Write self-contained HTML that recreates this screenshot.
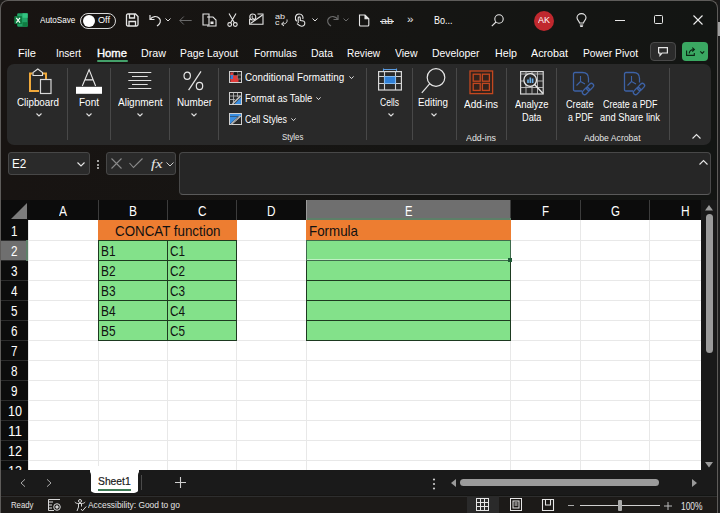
<!DOCTYPE html>
<html><head><meta charset="utf-8">
<style>
*{box-sizing:border-box;margin:0;padding:0}
html,body{width:720px;height:513px;overflow:hidden;background:#1c1a18;font-family:"Liberation Sans",sans-serif;position:relative}
.x{position:absolute;white-space:nowrap;line-height:1;transform-origin:0 0}
.r{position:absolute}
svg{position:absolute;overflow:visible}
</style></head><body>
<div class="r" style="left:0px;top:0px;width:718px;height:513px;background:linear-gradient(90deg,#181412,#151513 60%,#131513);border:1px solid #5e5c5a;border-bottom:none;border-radius:8px 8px 0 0"></div>
<div class="r" style="left:718px;top:0px;width:2px;height:513px;background:#1b1b1b;"></div>
<div class="r" style="left:718px;top:22px;width:2px;height:14px;background:#a0a0a0;"></div>
<div class="r" style="left:718px;top:36px;width:2px;height:477px;background:#1e1e1e;"></div>
<svg style="left:13.5px;top:13px" width="14" height="14" viewBox="0 0 14 14">
<rect x="3.2" y="0.3" width="10.5" height="13.4" rx="1.2" fill="#21a366"/>
<rect x="8.5" y="0.3" width="5.2" height="4.5" fill="#33c481"/>
<rect x="8.5" y="9.2" width="5.2" height="4.5" fill="#107c41"/>
<rect x="0.3" y="3" width="7.8" height="8" rx="1" fill="#107c41"/>
<path d="M2.3 4.8 L6 9.6 M6 4.8 L2.3 9.6" stroke="#fff" stroke-width="1.1"/></svg>
<div class="x" style="left:40px;top:15.58px;font-size:9px;color:#fff;transform:scaleX(0.904);">AutoSave</div>
<div class="r" style="left:80px;top:12.5px;width:36px;height:16px;background:transparent;border:1.2px solid #d8d8d8;border-radius:8px"></div>
<div class="r" style="left:82.5px;top:14.5px;width:12px;height:12px;background:#fff;border-radius:50%"></div>
<div class="x" style="left:98px;top:15.16px;font-size:9.5px;color:#fff;transform:scaleX(0.960);">Off</div>
<svg style="left:125px;top:13px" width="14" height="14" viewBox="0 0 14 14" fill="none" stroke="#e6e6e6" stroke-width="1.3">
<path d="M1.5 2.5 Q1.5 1 3 1 H10.5 L13 3.5 V11.5 Q13 13 11.5 13 H3 Q1.5 13 1.5 11.5 Z"/><path d="M4.5 1 V5 H9.5 V1"/><path d="M4 13 V8.5 H10.5 V13"/></svg>
<svg style="left:148px;top:13px" width="14" height="14" viewBox="0 0 14 14" fill="none" stroke="#e6e6e6" stroke-width="1.2">
<path d="M2 2 V6.5 H6.5"/><path d="M2.3 6.3 C4 3 9 2.5 11.5 5.5 C13.5 8 12 11 9 13"/></svg>
<svg style="left:165px;top:18px" width="6" height="4" viewBox="0 0 6 4" fill="none" stroke="#ddd" stroke-width="1"><path d="M0.5 0.5 L3 3 L5.5 0.5"/></svg>
<svg style="left:179px;top:16px" width="13" height="9" viewBox="0 0 13 9" fill="none" stroke="#6a6a6a" stroke-width="1">
<path d="M12.7 4.5 H0.8 M4.8 0.5 L0.8 4.5 L4.8 8.5"/></svg>
<svg style="left:202px;top:13px" width="15" height="14" viewBox="0 0 15 14" fill="none" stroke="#e6e6e6" stroke-width="1.1">
<path d="M1 1 H7 V12 H1 Z"/><path d="M5 4 H11 L14 7 V13 H5"/><rect x="8.5" y="8.5" width="3" height="2.5" fill="#e6e6e6" stroke="none"/></svg>
<svg style="left:227px;top:13px" width="11" height="14" viewBox="0 0 11 14" fill="none" stroke="#e6e6e6" stroke-width="1.1">
<path d="M2 0.5 L7.5 10 M9 0.5 L3.5 10"/><circle cx="2.7" cy="11.5" r="1.9"/><circle cx="8.3" cy="11.5" r="1.9"/></svg>
<svg style="left:249px;top:13px" width="15" height="12" viewBox="0 0 15 12" fill="none" stroke="#e6e6e6" stroke-width="1.1">
<path d="M0.6 6 V11.2 H14 V1 H8.5"/><path d="M1.5 10.5 L13.5 2"/><circle cx="3.8" cy="4" r="3"/><path d="M3.2 2.5 V5.5 H4.8" stroke-width="0.9"/></svg>
<div class="x" style="left:275.2px;top:13.25px;font-size:7.5px;color:#e6e6e6;transform:scaleX(1.199);">ab</div>
<div class="x" style="left:275.2px;top:18.85px;font-size:7.5px;color:#e6e6e6;transform:scaleX(1.200);">c</div>
<svg style="left:280px;top:19px" width="8" height="7" viewBox="0 0 8 7" fill="none" stroke="#e6e6e6" stroke-width="1"><path d="M7 0.5 C7.5 3.5 6 5 2 5 M4 2.8 L1.5 5 L4 7"/></svg>
<svg style="left:294px;top:13px" width="12" height="14" viewBox="0 0 12 14" fill="none" stroke="#e6e6e6" stroke-width="1.1">
<path d="M2.8 8.2 C0.5 6.5 0.8 1 5 1 C8.5 1 9.5 4 8.8 6"/><path d="M4.2 10 V5 C4.2 3.5 6.3 3.5 6.3 5 V7.5 C8 7.5 10.8 8 10.8 10 C10.8 12 9.5 13.2 7.5 13.2 C5.5 13.2 4.5 12 3 10.5"/></svg>
<svg style="left:312px;top:18px" width="6" height="4" viewBox="0 0 6 4" fill="none" stroke="#ddd" stroke-width="1"><path d="M0.5 0.5 L3 3 L5.5 0.5"/></svg>
<svg style="left:326px;top:13px" width="14" height="14" viewBox="0 0 14 14" fill="none" stroke="#6a6a6a" stroke-width="1.2">
<path d="M12 2 V6.5 H7.5"/><path d="M11.7 6.3 C10 3 5 2.5 2.5 5.5 C0.5 8 2 11 5 13"/></svg>
<svg style="left:343px;top:18px" width="6" height="4" viewBox="0 0 6 4" fill="none" stroke="#6a6a6a" stroke-width="1"><path d="M0.5 0.5 L3 3 L5.5 0.5"/></svg>
<svg style="left:358px;top:14px" width="12" height="13" viewBox="0 0 12 13" fill="none" stroke="#e6e6e6" stroke-width="1.1">
<path d="M1.5 1 H7 L10.8 4.8 V11 Q10.8 12 9.8 12 H2.5 Q1.5 12 1.5 11 Z"/><path d="M7 1 V4.8 H10.8" fill="#e6e6e6"/></svg>
<div class="x" style="left:381px;top:15.76px;font-size:9.5px;color:#e6e6e6;transform:scaleX(1.136);">ab</div>
<div class="r" style="left:380px;top:20.5px;width:14px;height:1px;background:#e6e6e6;"></div>
<div class="x" style="left:407px;top:15.04px;font-size:10px;color:#e6e6e6;transform:scaleX(1.169);">&raquo;</div>
<div class="x" style="left:434px;top:15.54px;font-size:10px;color:#fff;transform:scaleX(0.900);">Bo...</div>
<svg style="left:491px;top:14px" width="13" height="13" viewBox="0 0 13 13" fill="none" stroke="#e6e6e6" stroke-width="1.1">
<circle cx="8" cy="5" r="4.2"/><path d="M5 8 L0.8 12.2"/></svg>
<div class="r" style="left:533.5px;top:11px;width:20px;height:20px;background:#c0282e;border-radius:50%"></div>
<div class="x" style="left:537.5px;top:16.38px;font-size:9px;color:#fff;transform:scaleX(0.999);">AK</div>
<svg style="left:576px;top:13px" width="11" height="14" viewBox="0 0 11 14" fill="none" stroke="#e6e6e6" stroke-width="1.1">
<path d="M3.5 10 C3.5 8 1 7 1 4.8 C1 2.4 3 0.6 5.5 0.6 C8 0.6 10 2.4 10 4.8 C10 7 7.5 8 7.5 10 Z"/><path d="M3.8 12 H7.2 M4.2 13.4 H6.8"/></svg>
<div class="r" style="left:615px;top:20px;width:10px;height:1px;background:#e6e6e6;"></div>
<div class="r" style="left:654px;top:15px;width:9px;height:9px;background:transparent;border:1.1px solid #e6e6e6;border-radius:1.5px"></div>
<svg style="left:693px;top:15px" width="10" height="10" viewBox="0 0 10 10" fill="none" stroke="#eee" stroke-width="1.1"><path d="M0.5 0.5 L9.5 9.5 M9.5 0.5 L0.5 9.5"/></svg>
<div class="x" style="left:18px;top:47.89px;font-size:11px;color:#fff;transform:scaleX(1.015);">File</div>
<div class="x" style="left:56px;top:47.89px;font-size:11px;color:#fff;transform:scaleX(0.909);">Insert</div>
<div class="x" style="left:97px;top:47.89px;font-size:11px;color:#fff;transform:scaleX(1.022);-webkit-text-stroke:0.35px #fff">Home</div>
<div class="x" style="left:141px;top:47.89px;font-size:11px;color:#fff;transform:scaleX(0.974);">Draw</div>
<div class="x" style="left:180px;top:47.89px;font-size:11px;color:#fff;transform:scaleX(0.939);">Page Layout</div>
<div class="x" style="left:254px;top:47.89px;font-size:11px;color:#fff;transform:scaleX(0.938);">Formulas</div>
<div class="x" style="left:311px;top:47.89px;font-size:11px;color:#fff;transform:scaleX(0.947);">Data</div>
<div class="x" style="left:347px;top:47.89px;font-size:11px;color:#fff;transform:scaleX(0.915);">Review</div>
<div class="x" style="left:394.5px;top:47.89px;font-size:11px;color:#fff;transform:scaleX(0.952);">View</div>
<div class="x" style="left:432px;top:47.89px;font-size:11px;color:#fff;transform:scaleX(0.947);">Developer</div>
<div class="x" style="left:495px;top:47.89px;font-size:11px;color:#fff;transform:scaleX(0.972);">Help</div>
<div class="x" style="left:531px;top:47.89px;font-size:11px;color:#fff;transform:scaleX(0.976);">Acrobat</div>
<div class="x" style="left:583px;top:47.89px;font-size:11px;color:#fff;transform:scaleX(0.937);">Power Pivot</div>
<div class="r" style="left:97px;top:60px;width:31px;height:1.5px;background:#44a06a;border-radius:1px"></div>
<div class="r" style="left:650px;top:42px;width:26px;height:19px;background:#2b2b2b;border:1px solid #4a4a4a;border-radius:4px"></div>
<svg style="left:658px;top:47px" width="10" height="9" viewBox="0 0 10 9" fill="none" stroke="#e6e6e6" stroke-width="1.2"><path d="M0.6 0.6 H9.4 V6 H4 L2 8.3 V6 H0.6 Z"/></svg>
<div class="r" style="left:682px;top:42px;width:25.5px;height:19px;background:#3aa862;border-radius:4px"></div>
<svg style="left:686px;top:47px" width="10" height="9" viewBox="0 0 10 9" fill="none" stroke="#0b2413" stroke-width="1.1"><path d="M0.6 3.5 V8.4 H8.3 V6"/><path d="M3.2 6.5 C3.2 4 4.8 2.6 8 2.6 M6.3 0.6 L8.4 2.6 L6.3 4.6"/></svg>
<svg style="left:700px;top:50.5px" width="4.5" height="3" viewBox="0 0 4.5 3" fill="none" stroke="#0b2413" stroke-width="1.1"><path d="M0.3 0.3 L2.25 2.4 L4.2 0.3"/></svg>
<div class="r" style="left:7px;top:64px;width:704px;height:81px;background:#292929;border-radius:7px"></div>
<div class="r" style="left:67px;top:68px;width:1px;height:72px;background:#484848;"></div>
<div class="r" style="left:110px;top:68px;width:1px;height:72px;background:#484848;"></div>
<div class="r" style="left:169px;top:68px;width:1px;height:72px;background:#484848;"></div>
<div class="r" style="left:218px;top:68px;width:1px;height:72px;background:#484848;"></div>
<div class="r" style="left:366px;top:68px;width:1px;height:72px;background:#484848;"></div>
<div class="r" style="left:412px;top:68px;width:1px;height:72px;background:#484848;"></div>
<div class="r" style="left:456px;top:68px;width:1px;height:72px;background:#484848;"></div>
<div class="r" style="left:506px;top:68px;width:1px;height:72px;background:#484848;"></div>
<div class="r" style="left:556px;top:68px;width:1px;height:72px;background:#484848;"></div>
<div class="r" style="left:669px;top:68px;width:1px;height:72px;background:#484848;"></div>
<svg style="left:28px;top:68px" width="25" height="27" viewBox="0 0 25 27" fill="none">
<path d="M4.5 5.5 H2 V23 H11" stroke="#f0a93b" stroke-width="2"/><path d="M15 5.5 H18 V11" stroke="#f0a93b" stroke-width="2"/>
<path d="M5 7.5 V4.5 L9.8 1 L14.5 4.5 V7.5 Z" stroke="#e0e0e0" stroke-width="1.1" fill="#292929"/>
<rect x="12.5" y="11.5" width="10.5" height="14" stroke="#d8d8d8" stroke-width="1.2" fill="#292929"/></svg>
<div class="x" style="left:17.3px;top:97.53px;font-size:10px;color:#fff;transform:scaleX(0.981);">Clipboard</div>
<svg style="left:35.5px;top:112.5px" width="6" height="4" viewBox="0 0 6 4" fill="none" stroke="#e0e0e0" stroke-width="1.1"><path d="M0.5 0.5 L3 3 L5.5 0.5"/></svg>
<svg style="left:76px;top:68px" width="26" height="26" viewBox="0 0 26 26" fill="none">
<path d="M6.3 18 L13.1 1.6 L19.6 18 M9 11.9 H17.1" stroke="#eaeaea" stroke-width="1.1"/><rect x="0" y="18.8" width="26" height="7" fill="#fff"/></svg>
<div class="x" style="left:79px;top:97.53px;font-size:10px;color:#fff;transform:scaleX(0.999);">Font</div>
<svg style="left:86px;top:112.5px" width="6" height="4" viewBox="0 0 6 4" fill="none" stroke="#e0e0e0" stroke-width="1.1"><path d="M0.5 0.5 L3 3 L5.5 0.5"/></svg>
<svg style="left:128px;top:71px" width="24" height="19" viewBox="0 0 24 19" fill="none" stroke="#e0e0e0" stroke-width="1">
<path d="M0.3 1.5 H23.3 M4 5.5 H19.7 M0.3 9.5 H23.3 M4 13.5 H19.7 M0.3 17.5 H23.3"/></svg>
<div class="x" style="left:117.5px;top:97.53px;font-size:10px;color:#fff;transform:scaleX(1.001);">Alignment</div>
<svg style="left:137px;top:112.5px" width="6" height="4" viewBox="0 0 6 4" fill="none" stroke="#e0e0e0" stroke-width="1.1"><path d="M0.5 0.5 L3 3 L5.5 0.5"/></svg>
<svg style="left:182px;top:70px" width="22" height="22" viewBox="0 0 22 22" fill="none" stroke="#e6e6e6" stroke-width="1.2">
<ellipse cx="5.2" cy="5.7" rx="3.2" ry="3.6"/><ellipse cx="17.5" cy="16" rx="3.2" ry="3.6"/><path d="M6.6 20.2 L19 1.3"/></svg>
<div class="x" style="left:177px;top:97.53px;font-size:10px;color:#fff;transform:scaleX(0.984);">Number</div>
<svg style="left:191px;top:112.5px" width="6" height="4" viewBox="0 0 6 4" fill="none" stroke="#e0e0e0" stroke-width="1.1"><path d="M0.5 0.5 L3 3 L5.5 0.5"/></svg>
<svg style="left:229px;top:71px" width="13" height="12" viewBox="0 0 13 12">
<rect x="0.5" y="0.5" width="12" height="11" fill="#2a2a2a" stroke="#d0d0d0" stroke-width="1"/>
<path d="M4.5 1 V11 M8.5 1 V11 M1 4 H12 M1 8 H12" stroke="#8a8a8a" stroke-width="0.8"/>
<rect x="1.5" y="1.5" width="3" height="2.5" fill="#e03a3a"/><rect x="4.5" y="1.5" width="4" height="2.5" fill="#111"/>
<rect x="1.5" y="4" width="2.5" height="4" fill="#3a7ad8"/><rect x="4" y="4.5" width="4.5" height="3.5" fill="#e03a3a"/>
<rect x="1.5" y="8" width="8" height="3" fill="#e03a3a"/></svg>
<div class="x" style="left:245.4px;top:72.53px;font-size:10.3px;color:#fff;transform:scaleX(0.957);">Conditional Formatting</div>
<svg style="left:348.5px;top:75.5px" width="5" height="3.5" viewBox="0 0 5 3.5" fill="none" stroke="#e0e0e0" stroke-width="1"><path d="M0.4 0.4 L2.5 2.6 L4.6 0.4"/></svg>
<svg style="left:229px;top:92px" width="13" height="13" viewBox="0 0 13 13" fill="none">
<path d="M5 12.5 L12.5 5 V12.5 Z" fill="#3a8ee0"/><rect x="0.5" y="4.5" width="5" height="8" fill="#2a2a2a"/>
<rect x="0.5" y="0.5" width="12" height="12" stroke="#d0d0d0" stroke-width="1"/><path d="M0.5 4 H12.5 M0.5 7.5 H6 M4.5 0.5 V12.5 M8.5 0.5 V5" stroke="#c0c0c0" stroke-width="0.8"/>
<path d="M3.5 12 L11.5 4" stroke="#f0f0f0" stroke-width="1.6"/><path d="M3.5 12 L11.5 4" stroke="#2a2a2a" stroke-width="0.5"/></svg>
<div class="x" style="left:245.4px;top:94.33px;font-size:10px;color:#fff;transform:scaleX(0.941);">Format as Table</div>
<svg style="left:316px;top:96.5px" width="5" height="3.5" viewBox="0 0 5 3.5" fill="none" stroke="#e0e0e0" stroke-width="1"><path d="M0.4 0.4 L2.5 2.6 L4.6 0.4"/></svg>
<svg style="left:229px;top:113px" width="13" height="12" viewBox="0 0 13 12" fill="none">
<rect x="1" y="1" width="11" height="2.5" fill="#3a8ee0"/><path d="M1 11 V4 L8.5 4 L1 11 Z" fill="#3a8ee0"/>
<rect x="0.5" y="0.5" width="12" height="11" stroke="#d0d0d0" stroke-width="1"/>
<path d="M2.5 11 L11.5 3" stroke="#f0f0f0" stroke-width="1.6"/><path d="M2.5 11 L11.5 3" stroke="#2a2a2a" stroke-width="0.5"/></svg>
<div class="x" style="left:245.4px;top:115.13px;font-size:10px;color:#fff;transform:scaleX(0.889);">Cell Styles</div>
<svg style="left:291px;top:117.5px" width="5" height="3.5" viewBox="0 0 5 3.5" fill="none" stroke="#e0e0e0" stroke-width="1"><path d="M0.4 0.4 L2.5 2.6 L4.6 0.4"/></svg>
<div class="x" style="left:282px;top:132.46px;font-size:9.5px;color:#e6e6e6;transform:scaleX(0.823);">Styles</div>
<svg style="left:378px;top:68px" width="24" height="23" viewBox="0 0 24 23" fill="none">
<path d="M5.5 1.5 H18.5 M5.5 0.5 V3 M18.5 0.5 V3" stroke="#5a9be0" stroke-width="1.1"/>
<rect x="6.5" y="8.5" width="11" height="7" fill="#2f7fd6"/>
<rect x="0.6" y="3.6" width="22.8" height="18.4" stroke="#d8d8d8" stroke-width="1.2"/>
<path d="M0.6 8.5 H23.4 M0.6 15.5 H23.4 M6.5 3.6 V22 M17.5 3.6 V22" stroke="#cfcfcf" stroke-width="1.1"/>
<path d="M6.5 8.5 H17.5 V15.5 H6.5 Z" stroke="#7fb8f0" stroke-width="1"/></svg>
<div class="x" style="left:380px;top:97.53px;font-size:10px;color:#fff;transform:scaleX(0.855);">Cells</div>
<svg style="left:387.5px;top:112.5px" width="6" height="4" viewBox="0 0 6 4" fill="none" stroke="#e0e0e0" stroke-width="1.1"><path d="M0.5 0.5 L3 3 L5.5 0.5"/></svg>
<svg style="left:421px;top:68px" width="25" height="26" viewBox="0 0 25 26" fill="none" stroke="#e6e6e6" stroke-width="1.2">
<circle cx="15" cy="9.5" r="8.8"/><path d="M8.8 15.7 L0.8 24.8"/></svg>
<div class="x" style="left:418px;top:97.53px;font-size:10px;color:#fff;transform:scaleX(0.981);">Editing</div>
<svg style="left:430.5px;top:112.5px" width="6" height="4" viewBox="0 0 6 4" fill="none" stroke="#e0e0e0" stroke-width="1.1"><path d="M0.5 0.5 L3 3 L5.5 0.5"/></svg>
<svg style="left:469px;top:70px" width="25" height="25" viewBox="0 0 25 25" fill="none" stroke="#c4471f" stroke-width="1.3">
<rect x="1" y="1" width="22.6" height="22.6" fill="#33231d"/><rect x="4.2" y="4.2" width="7" height="7"/><rect x="13.4" y="4.2" width="7" height="7"/><rect x="4.2" y="13.4" width="7" height="7"/><rect x="13.4" y="13.4" width="7" height="7"/></svg>
<div class="x" style="left:464px;top:99.53px;font-size:10px;color:#fff;transform:scaleX(1.003);">Add-ins</div>
<div class="x" style="left:466px;top:132.96px;font-size:9.5px;color:#e6e6e6;transform:scaleX(0.931);">Add-ins</div>
<svg style="left:520px;top:71px" width="24" height="24" viewBox="0 0 24 24" fill="none">
<rect x="0.6" y="0.6" width="22.6" height="22.4" stroke="#d8d8d8" stroke-width="1.2"/>
<path d="M0.6 3 H23 M0.6 10 H23 M0.6 16.5 H23 M6 0.6 V23 M12 0.6 V23 M17.5 0.6 V23" stroke="#bdbdbd" stroke-width="0.9"/>
<circle cx="10.2" cy="9" r="6.3" fill="#292929" stroke="#e6e6e6" stroke-width="1.3"/><path d="M14.6 13.6 L23 22.6" stroke="#e6e6e6" stroke-width="1.4"/>
<path d="M8 12 V8.5 M10.3 12 V6.5 M12.6 12 V7.5" stroke="#6aaee8" stroke-width="1.6"/></svg>
<div class="x" style="left:514.5px;top:99.53px;font-size:10px;color:#fff;transform:scaleX(0.942);">Analyze</div>
<div class="x" style="left:521.5px;top:112.53px;font-size:10px;color:#fff;transform:scaleX(0.923);">Data</div>
<svg style="left:572px;top:71px" width="23" height="25" viewBox="0 0 23 25" fill="none" stroke="#3d62a6" stroke-width="1.3">
<path d="M10 20 H3 Q1.5 20 1.5 18.5 V3 Q1.5 1.5 3 1.5 H10.5 Q16.5 1.5 16.5 7.5 V11.5"/><path d="M8.5 5 V10.5 M8.5 10.5 L4.5 14.5 M8.5 10.5 L13 13" stroke-width="1.1"/>
<g transform="rotate(-45 16 18)"><rect x="9" y="15.8" width="8" height="4.4" rx="2.2"/><rect x="15" y="15.8" width="8" height="4.4" rx="2.2"/></g></svg>
<svg style="left:622.5px;top:71px" width="23" height="25" viewBox="0 0 23 25" fill="none" stroke="#3d62a6" stroke-width="1.3">
<path d="M10 20 H3 Q1.5 20 1.5 18.5 V3 Q1.5 1.5 3 1.5 H10.5 Q16.5 1.5 16.5 7.5 V11.5"/><path d="M8.5 5 V10.5 M8.5 10.5 L4.5 14.5 M8.5 10.5 L13 13" stroke-width="1.1"/>
<g transform="rotate(-45 16 18)"><rect x="9" y="15.8" width="8" height="4.4" rx="2.2"/><rect x="15" y="15.8" width="8" height="4.4" rx="2.2"/></g></svg>
<div class="x" style="left:566px;top:99.53px;font-size:10px;color:#fff;transform:scaleX(0.916);">Create</div>
<div class="x" style="left:567.5px;top:112.53px;font-size:10px;color:#fff;transform:scaleX(0.882);">a PDF</div>
<div class="x" style="left:602.5px;top:99.53px;font-size:10px;color:#fff;transform:scaleX(0.891);">Create a PDF</div>
<div class="x" style="left:600px;top:112.53px;font-size:10px;color:#fff;transform:scaleX(0.938);">and Share link</div>
<div class="x" style="left:584px;top:132.96px;font-size:9.5px;color:#e6e6e6;transform:scaleX(0.907);">Adobe Acrobat</div>
<svg style="left:692px;top:134px" width="9" height="5" viewBox="0 0 9 5" fill="none" stroke="#e6e6e6" stroke-width="1.1"><path d="M0.5 4.5 L4.5 0.5 L8.5 4.5"/></svg>
<div class="r" style="left:7.5px;top:151.5px;width:82px;height:23px;background:#2a2a2a;border:1px solid #474747;border-radius:3px"></div>
<div class="x" style="left:11.8px;top:157.17px;font-size:13.5px;color:#fff;transform:scaleX(0.866);">E2</div>
<svg style="left:77px;top:162px" width="8" height="5" viewBox="0 0 8 5" fill="none" stroke="#e6e6e6" stroke-width="1.1"><path d="M0.5 0.5 L4 4 L7.5 0.5"/></svg>
<div class="r" style="left:97px;top:160px;width:2px;height:2px;background:#cfcfcf;border-radius:1px"></div>
<div class="r" style="left:97px;top:163.5px;width:2px;height:2px;background:#cfcfcf;border-radius:1px"></div>
<div class="r" style="left:97px;top:167px;width:2px;height:2px;background:#cfcfcf;border-radius:1px"></div>
<div class="r" style="left:106px;top:151.5px;width:70px;height:23px;background:#2a2a2a;border:1px solid #474747;border-radius:3px"></div>
<svg style="left:111px;top:158px" width="11" height="11" viewBox="0 0 11 11" fill="none" stroke="#8a8a8a" stroke-width="1.1"><path d="M0.5 0.5 L10.5 10.5 M10.5 0.5 L0.5 10.5"/></svg>
<svg style="left:129px;top:158px" width="14" height="10" viewBox="0 0 14 10" fill="none" stroke="#8a8a8a" stroke-width="1.1"><path d="M0.5 5 L4.5 9.5 L13.5 0.5"/></svg>
<div class="x" style="left:151px;top:157.00px;font-size:13px;color:#e6e6e6;transform:scaleX(1.226);font-family:'Liberation Serif',serif;font-style:italic">fx</div>
<svg style="left:166px;top:162px" width="8" height="5" viewBox="0 0 8 5" fill="none" stroke="#cfcfcf" stroke-width="1"><path d="M0.5 0.5 L4 4 L7.5 0.5"/></svg>
<div class="r" style="left:179px;top:151.5px;width:532px;height:43.5px;background:#262626;border:1px solid #484848;border-bottom-color:#5a5a5a;border-radius:4px"></div>
<svg style="left:699px;top:160px" width="9" height="5" viewBox="0 0 9 5" fill="none" stroke="#e6e6e6" stroke-width="1.1"><path d="M0.5 4.5 L4.5 0.5 L8.5 4.5"/></svg>
<div class="r" style="left:1px;top:200px;width:700px;height:270px;background:#ffffff;"></div>
<div class="r" style="left:701px;top:200px;width:16px;height:270px;background:#191919;"></div>
<div class="r" style="left:1px;top:200px;width:700px;height:20px;background:#0c0c0c;"></div>
<div class="r" style="left:306px;top:200px;width:205px;height:20px;background:#6f6f6f;"></div>
<div class="r" style="left:98px;top:200px;width:1px;height:20px;background:#3c3c3c;"></div>
<div class="r" style="left:167px;top:200px;width:1px;height:20px;background:#3c3c3c;"></div>
<div class="r" style="left:236px;top:200px;width:1px;height:20px;background:#3c3c3c;"></div>
<div class="r" style="left:306px;top:200px;width:1px;height:20px;background:#3c3c3c;"></div>
<div class="r" style="left:510px;top:200px;width:1px;height:20px;background:#3c3c3c;"></div>
<div class="r" style="left:580px;top:200px;width:1px;height:20px;background:#3c3c3c;"></div>
<div class="r" style="left:649px;top:200px;width:1px;height:20px;background:#3c3c3c;"></div>
<div class="x" style="left:59.0px;top:203.65px;font-size:14px;color:#fff;transform:scaleX(0.857);">A</div>
<div class="x" style="left:129.0px;top:203.65px;font-size:14px;color:#fff;transform:scaleX(0.857);">B</div>
<div class="x" style="left:198.25px;top:203.65px;font-size:14px;color:#fff;transform:scaleX(0.841);">C</div>
<div class="x" style="left:267.25px;top:203.65px;font-size:14px;color:#fff;transform:scaleX(0.841);">D</div>
<div class="x" style="left:404.75px;top:203.65px;font-size:14px;color:#fff;transform:scaleX(0.803);">E</div>
<div class="x" style="left:542.0px;top:203.65px;font-size:14px;color:#fff;transform:scaleX(0.819);">F</div>
<div class="x" style="left:610.5px;top:203.65px;font-size:14px;color:#fff;transform:scaleX(0.826);">G</div>
<div class="x" style="left:680.7px;top:203.65px;font-size:14px;color:#fff;transform:scaleX(0.851);">H</div>
<svg style="left:11px;top:203px" width="16" height="16" viewBox="0 0 16 16"><path d="M16 0 V16 H0 Z" fill="#7c7c7c"/></svg>
<div class="r" style="left:1px;top:220px;width:27px;height:250px;background:#0c0c0c;"></div>
<div class="r" style="left:1px;top:240px;width:27px;height:21px;background:#6f6f6f;"></div>
<div class="r" style="left:1px;top:240px;width:27px;height:1px;background:#2c2c2c;"></div>
<div class="r" style="left:1px;top:260px;width:27px;height:1px;background:#2c2c2c;"></div>
<div class="r" style="left:1px;top:280px;width:27px;height:1px;background:#2c2c2c;"></div>
<div class="r" style="left:1px;top:300px;width:27px;height:1px;background:#2c2c2c;"></div>
<div class="r" style="left:1px;top:320px;width:27px;height:1px;background:#2c2c2c;"></div>
<div class="r" style="left:1px;top:340px;width:27px;height:1px;background:#2c2c2c;"></div>
<div class="r" style="left:1px;top:360px;width:27px;height:1px;background:#2c2c2c;"></div>
<div class="r" style="left:1px;top:380px;width:27px;height:1px;background:#2c2c2c;"></div>
<div class="r" style="left:1px;top:400px;width:27px;height:1px;background:#2c2c2c;"></div>
<div class="r" style="left:1px;top:420px;width:27px;height:1px;background:#2c2c2c;"></div>
<div class="r" style="left:1px;top:440px;width:27px;height:1px;background:#2c2c2c;"></div>
<div class="r" style="left:1px;top:460px;width:27px;height:1px;background:#2c2c2c;"></div>
<div class="r" style="left:1px;top:480px;width:27px;height:1px;background:#2c2c2c;"></div>
<div class="r" style="left:28px;top:220px;width:1px;height:250px;background:#e6e6e6;"></div>
<div class="r" style="left:26px;top:240px;width:2px;height:21px;background:#5d7f68;"></div>
<div class="r" style="left:306px;top:218px;width:205px;height:2px;background:#5d7f68;"></div>
<div class="r" style="left:306px;top:200px;width:1px;height:20px;background:#9a9a9a;"></div>
<div class="r" style="left:98px;top:220px;width:1px;height:250px;background:#e8e8e8;"></div>
<div class="r" style="left:167px;top:220px;width:1px;height:250px;background:#e8e8e8;"></div>
<div class="r" style="left:236px;top:220px;width:1px;height:250px;background:#e8e8e8;"></div>
<div class="r" style="left:306px;top:220px;width:1px;height:250px;background:#e8e8e8;"></div>
<div class="r" style="left:510px;top:220px;width:1px;height:250px;background:#e8e8e8;"></div>
<div class="r" style="left:580px;top:220px;width:1px;height:250px;background:#e8e8e8;"></div>
<div class="r" style="left:649px;top:220px;width:1px;height:250px;background:#e8e8e8;"></div>
<div class="r" style="left:28px;top:240px;width:673px;height:1px;background:#e8e8e8;"></div>
<div class="r" style="left:28px;top:260px;width:673px;height:1px;background:#e8e8e8;"></div>
<div class="r" style="left:28px;top:280px;width:673px;height:1px;background:#e8e8e8;"></div>
<div class="r" style="left:28px;top:300px;width:673px;height:1px;background:#e8e8e8;"></div>
<div class="r" style="left:28px;top:320px;width:673px;height:1px;background:#e8e8e8;"></div>
<div class="r" style="left:28px;top:340px;width:673px;height:1px;background:#e8e8e8;"></div>
<div class="r" style="left:28px;top:360px;width:673px;height:1px;background:#e8e8e8;"></div>
<div class="r" style="left:28px;top:380px;width:673px;height:1px;background:#e8e8e8;"></div>
<div class="r" style="left:28px;top:400px;width:673px;height:1px;background:#e8e8e8;"></div>
<div class="r" style="left:28px;top:420px;width:673px;height:1px;background:#e8e8e8;"></div>
<div class="r" style="left:28px;top:440px;width:673px;height:1px;background:#e8e8e8;"></div>
<div class="r" style="left:28px;top:460px;width:673px;height:1px;background:#e8e8e8;"></div>
<div class="x" style="left:11.25px;top:224.15px;font-size:14px;color:#fff;transform:scaleX(0.835);">1</div>
<div class="x" style="left:11.25px;top:244.15px;font-size:14px;color:#fff;transform:scaleX(0.835);">2</div>
<div class="x" style="left:11.25px;top:264.15px;font-size:14px;color:#fff;transform:scaleX(0.835);">3</div>
<div class="x" style="left:11.25px;top:284.15px;font-size:14px;color:#fff;transform:scaleX(0.835);">4</div>
<div class="x" style="left:11.25px;top:304.15px;font-size:14px;color:#fff;transform:scaleX(0.835);">5</div>
<div class="x" style="left:11.25px;top:324.15px;font-size:14px;color:#fff;transform:scaleX(0.835);">6</div>
<div class="x" style="left:11.25px;top:344.15px;font-size:14px;color:#fff;transform:scaleX(0.835);">7</div>
<div class="x" style="left:11.25px;top:364.15px;font-size:14px;color:#fff;transform:scaleX(0.835);">8</div>
<div class="x" style="left:11.25px;top:384.15px;font-size:14px;color:#fff;transform:scaleX(0.835);">9</div>
<div class="x" style="left:7.5px;top:404.15px;font-size:14px;color:#fff;transform:scaleX(0.899);">10</div>
<div class="x" style="left:7.5px;top:424.15px;font-size:14px;color:#fff;transform:scaleX(0.963);">11</div>
<div class="x" style="left:7.5px;top:444.15px;font-size:14px;color:#fff;transform:scaleX(0.899);">12</div>
<div class="x" style="left:7.5px;top:464.15px;font-size:14px;color:#fff;transform:scaleX(0.899);">13</div>
<div class="r" style="left:98px;top:220px;width:139px;height:20px;background:#ed7d31;"></div>
<div class="r" style="left:306px;top:220px;width:205px;height:20px;background:#ed7d31;"></div>
<div class="r" style="left:98px;top:240px;width:139px;height:101px;background:#83e18a;"></div>
<div class="r" style="left:306px;top:240px;width:205px;height:101px;background:#83e18a;"></div>
<div class="r" style="left:98px;top:240px;width:139px;height:1px;background:#1d3a20;"></div>
<div class="r" style="left:306px;top:240px;width:205px;height:1px;background:#1d3a20;"></div>
<div class="r" style="left:98px;top:260px;width:139px;height:1px;background:#1d3a20;"></div>
<div class="r" style="left:306px;top:260px;width:205px;height:1px;background:#1d3a20;"></div>
<div class="r" style="left:98px;top:280px;width:139px;height:1px;background:#1d3a20;"></div>
<div class="r" style="left:306px;top:280px;width:205px;height:1px;background:#1d3a20;"></div>
<div class="r" style="left:98px;top:300px;width:139px;height:1px;background:#1d3a20;"></div>
<div class="r" style="left:306px;top:300px;width:205px;height:1px;background:#1d3a20;"></div>
<div class="r" style="left:98px;top:320px;width:139px;height:1px;background:#1d3a20;"></div>
<div class="r" style="left:306px;top:320px;width:205px;height:1px;background:#1d3a20;"></div>
<div class="r" style="left:98px;top:340px;width:139px;height:1px;background:#1d3a20;"></div>
<div class="r" style="left:306px;top:340px;width:205px;height:1px;background:#1d3a20;"></div>
<div class="r" style="left:98px;top:240px;width:1px;height:101px;background:#1d3a20;"></div>
<div class="r" style="left:167px;top:240px;width:1px;height:101px;background:#1d3a20;"></div>
<div class="r" style="left:236px;top:240px;width:1px;height:101px;background:#1d3a20;"></div>
<div class="r" style="left:306px;top:240px;width:1px;height:101px;background:#1d3a20;"></div>
<div class="r" style="left:510px;top:240px;width:1px;height:101px;background:#1d3a20;"></div>
<div class="r" style="left:306px;top:240px;width:205px;height:21px;background:transparent;border:1px solid #3f6a4c"></div>
<div class="r" style="left:307px;top:259px;width:203px;height:1px;background:#bff0c3;"></div>
<div class="r" style="left:508px;top:258px;width:4px;height:4px;background:#1e5a36;"></div>
<div class="x" style="left:115px;top:224.03px;font-size:14.5px;color:#111;transform:scaleX(0.920);">CONCAT function</div>
<div class="x" style="left:309px;top:224.03px;font-size:14.5px;color:#111;transform:scaleX(0.921);">Formula</div>
<div class="x" style="left:101.4px;top:243.53px;font-size:14.5px;color:#111;transform:scaleX(0.818);">B1</div>
<div class="x" style="left:170px;top:243.53px;font-size:14.5px;color:#111;transform:scaleX(0.809);">C1</div>
<div class="x" style="left:101.4px;top:263.53px;font-size:14.5px;color:#111;transform:scaleX(0.818);">B2</div>
<div class="x" style="left:170px;top:263.53px;font-size:14.5px;color:#111;transform:scaleX(0.809);">C2</div>
<div class="x" style="left:101.4px;top:283.53px;font-size:14.5px;color:#111;transform:scaleX(0.818);">B3</div>
<div class="x" style="left:170px;top:283.53px;font-size:14.5px;color:#111;transform:scaleX(0.809);">C3</div>
<div class="x" style="left:101.4px;top:303.53px;font-size:14.5px;color:#111;transform:scaleX(0.818);">B4</div>
<div class="x" style="left:170px;top:303.53px;font-size:14.5px;color:#111;transform:scaleX(0.809);">C4</div>
<div class="x" style="left:101.4px;top:323.53px;font-size:14.5px;color:#111;transform:scaleX(0.818);">B5</div>
<div class="x" style="left:170px;top:323.53px;font-size:14.5px;color:#111;transform:scaleX(0.809);">C5</div>
<svg style="left:705px;top:204.5px" width="8" height="5.5" viewBox="0 0 8 5.5"><path d="M0 5.5 L4 0 L8 5.5 Z" fill="#9a9a9a"/></svg>
<div class="r" style="left:706px;top:214px;width:7px;height:139px;background:#9b9b9b;border-radius:3.5px"></div>
<svg style="left:705px;top:462px" width="8" height="5.5" viewBox="0 0 8 5.5"><path d="M0 0 L4 5.5 L8 0 Z" fill="#9a9a9a"/></svg>
<div class="r" style="left:717px;top:200px;width:1px;height:313px;background:#5e5c5a;"></div>
<div class="r" style="left:1px;top:470px;width:716px;height:25px;background:#1a1a1a;"></div>
<div class="r" style="left:90px;top:466px;width:49px;height:27px;background:#ffffff;border-radius:0 0 5px 5px"></div>
<div class="r" style="left:1px;top:470px;width:90px;height:25px;background:#1a1a1a;border-top-right-radius:5px"></div>
<div class="r" style="left:138px;top:470px;width:579px;height:25px;background:#1a1a1a;border-top-left-radius:5px"></div>
<svg style="left:20px;top:479px" width="6" height="8" viewBox="0 0 6 8" fill="none" stroke="#a8a8a8" stroke-width="1"><path d="M5 0.3 L1 4 L5 7.7"/></svg>
<svg style="left:46px;top:479px" width="6" height="8" viewBox="0 0 6 8" fill="none" stroke="#a8a8a8" stroke-width="1"><path d="M1 0.3 L5 4 L1 7.7"/></svg>
<div class="x" style="left:98px;top:475.57px;font-size:11.5px;color:#1a1a1a;transform:scaleX(0.897);-webkit-text-stroke:0.2px #1a1a1a">Sheet1</div>
<div class="r" style="left:98px;top:488.8px;width:33px;height:2px;background:#3d7a55;"></div>
<div class="r" style="left:141px;top:475px;width:1px;height:15px;background:#4a4a4a;"></div>
<svg style="left:175px;top:477px" width="11" height="11" viewBox="0 0 11 11" fill="none" stroke="#d0d0d0" stroke-width="1.1"><path d="M5.5 0 V11 M0 5.5 H11"/></svg>
<svg style="left:432px;top:478px" width="4" height="12" viewBox="0 0 4 12"><circle cx="2" cy="1.5" r="1.1" fill="#ccc"/><circle cx="2" cy="6" r="1.1" fill="#ccc"/><circle cx="2" cy="10.5" r="1.1" fill="#ccc"/></svg>
<svg style="left:451px;top:479px" width="5" height="8" viewBox="0 0 5 8"><path d="M5 0 V8 L0 4 Z" fill="#9a9a9a"/></svg>
<div class="r" style="left:460px;top:479px;width:199px;height:7px;background:#9b9b9b;border-radius:3.5px"></div>
<svg style="left:692px;top:478.5px" width="5" height="8" viewBox="0 0 5 8"><path d="M0 0 V8 L5 4 Z" fill="#9a9a9a"/></svg>
<div class="r" style="left:1px;top:496px;width:716px;height:17px;background:#1c1a18;"></div>
<div class="r" style="left:1px;top:496px;width:716px;height:1px;background:#2e2e2e;"></div>
<div class="x" style="left:10.5px;top:500.83px;font-size:9.3px;color:#e6e6e6;transform:scaleX(0.837);">Ready</div>
<svg style="left:48px;top:499px" width="13" height="12" viewBox="0 0 13 12" fill="none" stroke="#d8d8d8" stroke-width="1"><path d="M0.5 0.5 H12 M0.5 3 H5 M0.5 6 H4 M0.5 9 H4 M0.5 0.5 V11.5 H6"/><circle cx="9" cy="8" r="3.3"/><circle cx="9" cy="8" r="1.2" fill="#d8d8d8"/></svg>
<svg style="left:74px;top:499px" width="13" height="13" viewBox="0 0 13 13" fill="none" stroke="#d8d8d8" stroke-width="1"><circle cx="6" cy="2" r="1.5"/><path d="M0.8 3 C2 4.5 3.5 4.5 4.5 4.5 H7.5 C8.5 4.5 10 4.5 11.2 3 M4.5 4.5 V8 L3 12 M7.5 4.5 V7.5 M7 10 L8.5 11.8 L12.2 7.5"/></svg>
<div class="x" style="left:88.4px;top:501.03px;font-size:9.3px;color:#e6e6e6;transform:scaleX(0.903);">Accessibility: Good to go</div>
<div class="r" style="left:467px;top:496px;width:32px;height:17px;background:#2a2a2a;"></div>
<svg style="left:476px;top:498px" width="13" height="13" viewBox="0 0 13 13" fill="none" stroke="#e6e6e6" stroke-width="1"><rect x="0.5" y="0.5" width="12" height="12"/><path d="M0.5 4.5 H12.5 M0.5 8.5 H12.5 M4.5 0.5 V12.5 M8.5 0.5 V12.5"/></svg>
<svg style="left:510px;top:498px" width="12" height="13" viewBox="0 0 12 13" fill="none" stroke="#e6e6e6" stroke-width="1"><rect x="0.5" y="0.5" width="11" height="12"/><rect x="3" y="3" width="6" height="7"/><path d="M4.5 5 H7.5 M4.5 7 H7.5"/></svg>
<svg style="left:542px;top:499px" width="12" height="12" viewBox="0 0 12 12" fill="none" stroke="#e6e6e6" stroke-width="1.1"><path d="M0.5 0.5 H11.5 V11.5 H0.5 Z M3.5 0.5 V6 H8.5 V0.5"/></svg>
<div class="r" style="left:568px;top:505px;width:6px;height:1px;background:#aaa;"></div>
<div class="r" style="left:580px;top:505px;width:80px;height:1px;background:#cfcfcf;"></div>
<div class="r" style="left:618px;top:500px;width:4px;height:11px;background:#aaa;border-radius:1px"></div>
<svg style="left:663.5px;top:501.5px" width="8" height="8" viewBox="0 0 8 8" fill="none" stroke="#bbb" stroke-width="1"><path d="M4 0 V8 M0 4 H8"/></svg>
<div class="x" style="left:680.5px;top:501.54px;font-size:10px;color:#e6e6e6;transform:scaleX(0.841);">100%</div>
</body></html>
